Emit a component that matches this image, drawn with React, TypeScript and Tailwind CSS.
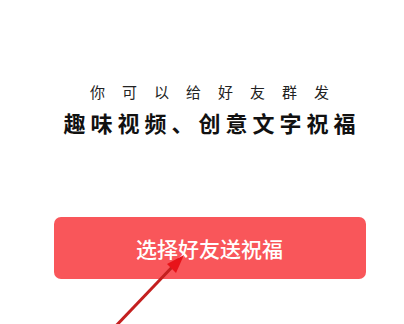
import React from "react";

export default function App() {
  return (
    <div
      className="relative h-[324px] w-[404px] overflow-hidden bg-white pl-[15px]"
      style={{ fontFamily: '"Noto Sans CJK SC", "Noto Sans", sans-serif' }}
    >
      <div className="flex flex-col items-center pt-[80px]">
        <p className="pl-[17px] text-[15px] leading-[24px] tracking-[17px] text-[#222]">
          你可以给好友群发
        </p>
        <p className="mt-[2px] pl-[5px] text-[22px] font-bold leading-[32px] tracking-[5px] text-[#111]">
          趣味视频、创意文字祝福
        </p>
      </div>

      <div className="mt-[79px] flex justify-center">
        <button className="flex h-[62px] w-[312px] items-center justify-center rounded-[7px] bg-[#f9565a] text-[21px] font-medium leading-none text-white">
          选择好友送祝福
        </button>
      </div>

      {/* red annotation arrow */}
      <svg
        className="pointer-events-none absolute left-0 top-0"
        width="404"
        height="324"
        viewBox="0 0 404 324"
      >
        <line x1="112" y1="330" x2="176" y2="263" stroke="#c4201f" strokeWidth="3" />
        <polygon points="184,255 167,264 176,273" fill="#e8141a" />
      </svg>
    </div>
  );
}
